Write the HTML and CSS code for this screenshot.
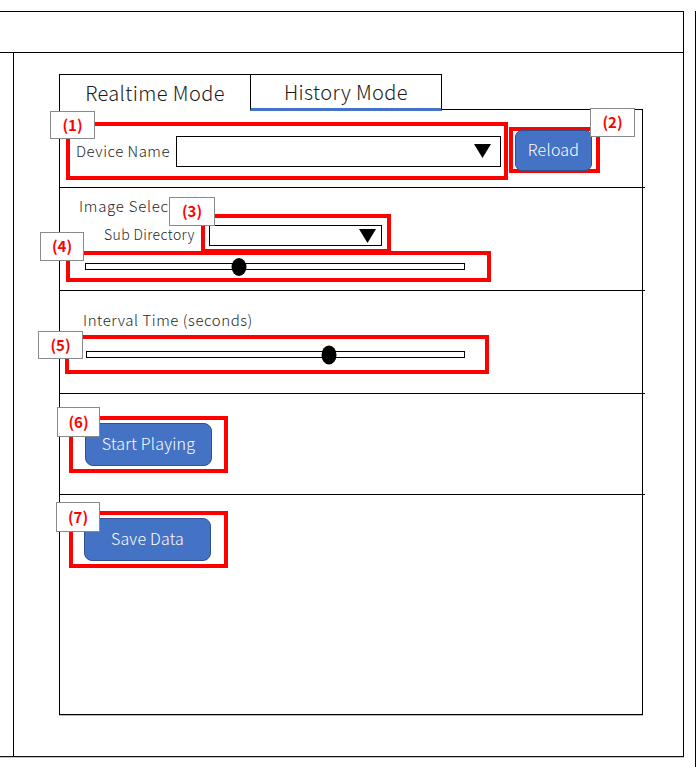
FILE: index.html
```html
<!DOCTYPE html>
<html lang="ja">
<head>
<meta charset="utf-8">
<title>History Mode</title>
<link rel="stylesheet" href="styles.css">
</head>
<body>
<div class="page">
  <div class="app">
    <header class="topbar"></header>
    <div class="body">
      <aside class="sidebar"></aside>
      <main class="main">
        <div class="tabs">
          <div class="tab">Realtime Mode</div>
          <div class="tab tab-active">History Mode</div>
        </div>
        <div class="panel">
          <section class="sec sec-device">
            <div class="mark mark-device">
              <span class="tag tag-1">(1)</span>
              <span class="field-label">Device Name</span>
              <div class="select select-device">
                <svg class="caret" width="17" height="14" viewBox="0 0 17 14"><polygon points="0,0 17,0 8.5,14" fill="#000"/></svg>
              </div>
            </div>
            <div class="mark mark-reload">
              <span class="tag tag-2">(2)</span>
              <button class="btn btn-reload">Reload</button>
            </div>
          </section>

          <section class="sec sec-image">
            <div class="sec-title title-image">Image Select</div>
            <div class="subrow">
              <span class="sub-label">Sub Directory</span>
              <div class="mark mark-subdir">
                <span class="tag tag-3">(3)</span>
                <div class="select select-subdir">
                  <svg class="caret" width="17" height="14" viewBox="0 0 17 14"><polygon points="0,0 17,0 8.5,14" fill="#000"/></svg>
                </div>
              </div>
            </div>
            <div class="mark mark-image-slider">
              <span class="tag tag-4">(4)</span>
              <div class="track track-image">
                <span class="thumb" style="left: 40.6%"></span>
              </div>
            </div>
          </section>

          <section class="sec sec-interval">
            <div class="sec-title title-interval">Interval Time (seconds)</div>
            <div class="mark mark-interval">
              <span class="tag tag-5">(5)</span>
              <div class="track track-interval">
                <span class="thumb" style="left: 64.2%"></span>
              </div>
            </div>
          </section>

          <section class="sec sec-play">
            <div class="mark mark-play">
              <span class="tag tag-6">(6)</span>
              <button class="btn btn-wide">Start Playing</button>
            </div>
          </section>

          <section class="sec sec-save">
            <div class="mark mark-save">
              <span class="tag tag-7">(7)</span>
              <button class="btn btn-wide">Save Data</button>
            </div>
          </section>
        </div>
      </main>
    </div>
  </div>
</div>
</body>
</html>
```

FILE: styles.css
```css
* {
  box-sizing: border-box;
}

html, body {
  margin: 0;
  padding: 0;
  background: #fff;
}

body {
  font-family: "Noto Sans CJK JP", "Noto Sans", sans-serif;
  font-weight: 300;
  color: #1f1f1f;
  overflow: hidden;
}

.page {
  width: 696px;
  height: 767px;
  border-right: 1px solid #000;
}

.app {
  margin-top: 11px;
  width: 684px;
  height: 746px;
  border-top: 1px solid #000;
  border-right: 1px solid #000;
  border-bottom: 1px solid #111;
  box-shadow: 0 1px 0 #c8c8c8;
  display: flex;
  flex-direction: column;
}

.topbar {
  height: 41px;
  border-bottom: 1px solid #000;
  flex: 0 0 auto;
}

.body {
  flex: 1 1 auto;
  display: flex;
}

.sidebar {
  width: 14px;
  border-right: 1px solid #000;
  flex: 0 0 auto;
}

.main {
  flex: 1 1 auto;
  padding: 21px 0 0 45px;
}

/* tabs */
.tabs {
  display: flex;
  height: 37px;
  margin-bottom: -2px;
  position: relative;
  z-index: 1;
}

.tab {
  width: 192px;
  height: 37px;
  border: 1px solid #000;
  border-bottom: none;
  background: #fff;
  font-size: 20px;
  color: #1a1a1a;
  display: flex;
  align-items: center;
  justify-content: center;
  padding-bottom: 2px;
  letter-spacing: 0.4px;
}

.tab + .tab {
  margin-left: -1px;
}

.tab-active {
  border-bottom: 3px solid #4472c4;
  padding-bottom: 0;
}

/* panel */
.panel {
  width: 584px;
  height: 606px;
  border: 1px solid #000;
  box-shadow: 0 1px 0 #b8b8b8;
  background: #fff;
}

.sec {
  margin-right: -3px;
  border-bottom: 1px solid #000;
}

.sec-device {
  height: 78px;
  display: flex;
  align-items: flex-start;
  padding: 12px 0 0 6px;
}

.sec-image {
  height: 103px;
  padding-top: 9px;
}

.sec-interval {
  height: 103px;
  padding-top: 19px;
}

.sec-play {
  height: 101px;
  padding: 22px 0 0 9px;
}

.sec-save {
  border-bottom: none;
  padding: 16px 0 0 9px;
}

/* red annotation marks */
.mark {
  position: relative;
  border: 4px solid #ff0000;
  display: flex;
  align-items: center;
}

.tag {
  position: absolute;
  z-index: 2;
  width: 45px;
  height: 28px;
  border: 1px solid #8a8a8a;
  background: #fff;
  color: #ff0000;
  font-weight: bold;
  font-size: 15px;
  line-height: 1;
  display: flex;
  align-items: center;
  justify-content: center;
  padding-bottom: 2px;
}

.tag-1 { left: -20px; top: -15px; }
.tag-2 { left: 77px; top: -23px; height: 29px; }
.tag-3 { left: -36px; top: -21px; width: 46px; height: 29px; }
.tag-4 { left: -30px; top: -23px; width: 44px; height: 29px; }
.tag-5 { left: -31px; top: -8px; }
.tag-6 { left: -16px; top: -13px; width: 43px; height: 30px; }
.tag-7 { left: -17px; top: -13px; width: 44px; height: 30px; }

.mark-device {
  width: 442px;
  height: 58px;
  padding-left: 6px;
}

.field-label {
  font-size: 15px;
  letter-spacing: 0.5px;
  white-space: nowrap;
  padding-bottom: 1px;
}

.select {
  background: #fff;
  border: 1px solid #000;
  display: flex;
  align-items: center;
  justify-content: flex-end;
}

.select-device {
  width: 325px;
  height: 31px;
  margin-left: auto;
  margin-right: 3px;
  padding-right: 9px;
}

.mark-reload {
  width: 91px;
  height: 46px;
  margin: 5px 0 0 1px;
  padding-left: 2px;
}

.btn {
  font-family: "Noto Sans CJK JP", "Noto Sans", sans-serif;
  font-weight: 300;
  background: #4472c4;
  color: #fff;
  border: 1px solid #2f528f;
  padding: 0 0 3px;
  font-size: 16px;
  flex: 0 0 auto;
  letter-spacing: 0.2px;
}

.btn-reload {
  width: 77px;
  height: 41px;
  border-radius: 7px;
}

.btn-wide {
  width: 127px;
  height: 43px;
  border-radius: 8px;
}

/* image select */
.sec-title {
  font-size: 15px;
  line-height: 18px;
  letter-spacing: 0.55px;
}

.title-image {
  margin-left: 19px;
  letter-spacing: 0.75px;
}

.title-interval {
  margin-left: 23px;
  line-height: 20px;
}

.subrow {
  display: flex;
  align-items: center;
  margin-top: -1px;
  padding-left: 44px;
  position: relative;
  z-index: 1;
}

.sub-label {
  flex: 0 0 97px;
  font-size: 14px;
  letter-spacing: 0.4px;
  white-space: nowrap;
}

.mark-subdir {
  width: 190px;
  height: 39px;
  align-items: flex-start;
  padding: 7px 0 0 4px;
}

.select-subdir {
  width: 173px;
  height: 21px;
  padding-right: 5px;
}

.mark-image-slider {
  width: 425px;
  height: 31px;
  margin: -2px 0 0 6px;
  padding-left: 15px;
}

.track {
  position: relative;
  height: 7px;
  border: 1px solid #000;
  background: #fff;
}

.track-image {
  width: 380px;
}

.thumb {
  position: absolute;
  top: 50%;
  width: 15px;
  height: 18px;
  border-radius: 50%;
  background: #000;
  transform: translate(-50%, -50%);
}

/* interval */
.mark-interval {
  width: 424px;
  height: 39px;
  margin: 5px 0 0 5px;
  padding-left: 17px;
}

.track-interval {
  width: 379px;
}

.track-interval .thumb {
  height: 19px;
}

/* buttons */
.mark-play {
  width: 159px;
  height: 57px;
  padding-left: 12px;
}

.mark-save {
  width: 159px;
  height: 57px;
  padding-left: 11px;
}
```
